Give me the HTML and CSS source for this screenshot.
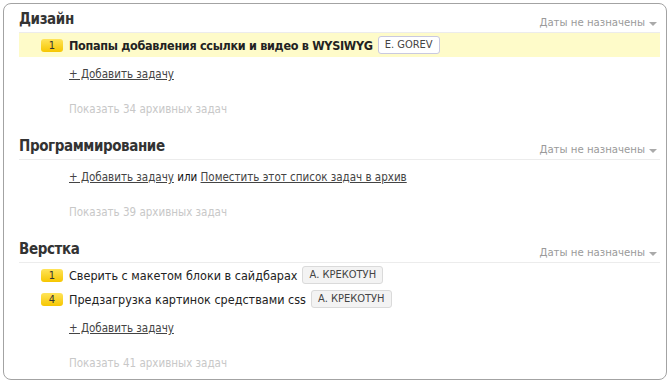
FILE: index.html
```html
<!DOCTYPE html>
<html lang="ru">
<head>
<meta charset="utf-8">
<link rel="stylesheet" href="styles.css">
</head>
<body>
<div class="panel">
  <section class="list">
    <div class="list-head">
      <h2 class="list-title">Дизайн</h2>
      <span class="dates">Даты не назначены <span class="caret"></span></span>
    </div>
    <div class="task task-hl">
      <span class="prio">1</span>
      <span class="task-text bold">Попапы добавления ссылки и видео в WYSIWYG</span>
      <span class="tag tag-me">E. GOREV</span>
    </div>
    <div class="add"><a href="#" class="link">+ Добавить задачу</a></div>
    <div class="archive">Показать 34 архивных задач</div>
  </section>
  <section class="list">
    <div class="list-head">
      <h2 class="list-title">Программирование</h2>
      <span class="dates">Даты не назначены <span class="caret"></span></span>
    </div>
    <div class="add"><a href="#" class="link">+ Добавить задачу</a> <span class="or">или</span> <a href="#" class="link">Поместить этот список задач в архив</a></div>
    <div class="archive">Показать 39 архивных задач</div>
  </section>
  <section class="list">
    <div class="list-head">
      <h2 class="list-title">Верстка</h2>
      <span class="dates">Даты не назначены <span class="caret"></span></span>
    </div>
    <div class="task">
      <span class="prio">1</span>
      <span class="task-text">Сверить с макетом блоки в сайдбарах</span>
      <span class="tag">А. КРЕКОТУН</span>
    </div>
    <div class="task">
      <span class="prio">4</span>
      <span class="task-text">Предзагрузка картинок средствами css</span>
      <span class="tag">А. КРЕКОТУН</span>
    </div>
    <div class="add"><a href="#" class="link">+ Добавить задачу</a></div>
    <div class="archive">Показать 41 архивных задач</div>
  </section>
</div>
</body>
</html>
```
FILE: styles.css
```css
* { box-sizing: border-box; }
html, body { margin: 0; padding: 0; background: #fff; }
body {
  font-family: "DejaVu Sans Condensed", "DejaVu Sans", "Liberation Sans", sans-serif;
  font-stretch: semi-condensed;
  color: #222;
}
.panel {
  margin: 3px 0 0 3px;
  width: 664px;
  height: 377px;
  border: 1px solid #a3a3a3;
  border-radius: 8px;
  padding: 0 6px 0 15px;
}
.list { padding-bottom: 8px; }
.list + .list { margin-top: 5px; }
.list-head {
  display: flex;
  justify-content: space-between;
  align-items: flex-end;
  padding: 5px 0 3px;
  border-bottom: 1px solid #ececec;
}
.list-title {
  margin: 0;
  font-size: 15px;
  line-height: 20px;
  font-weight: bold;
  color: #333;
  letter-spacing: -0.4px;
}
.dates {
  font-size: 11.3px;
  color: #9a9a9a;
  line-height: 16px;
  margin-right: 3px;
  margin-bottom: -2px;
  display: flex;
  align-items: center;
  gap: 4px;
}
.caret {
  width: 0; height: 0;
  border-left: 4px solid transparent;
  border-right: 4px solid transparent;
  border-top: 4px solid #aaa;
  margin-top: 2px;
}
.task {
  display: flex;
  align-items: center;
  height: 24px;
  padding-left: 22px;
  font-size: 12.5px;
}
.task-hl { background: #fefbc9; }
.prio {
  width: 22px;
  height: 13px;
  border-radius: 3px;
  background: linear-gradient(#ffe45a, #f6c600);
  color: #333;
  font-size: 11px;
  line-height: 13px;
  text-align: center;
  margin-right: 6px;
}
.task-text { color: #222; }
.bold { font-weight: bold; letter-spacing: -0.3px; }
.tag {
  margin-left: 5px;
  height: 18px;
  line-height: 16px;
  padding: 0 6px;
  border: 1px solid #dadada;
  background: #f3f3f3;
  border-radius: 3px;
  font-size: 11px;
  color: #444;
}
.tag-me { background: #fff; border-color: #c9c9e0; }
.add {
  margin-top: 8px;
  padding-left: 50px;
  font-size: 11.5px;
  line-height: 18px;
  color: #222;
}
.link { color: #444; text-decoration: underline; }
.or { color: #111; }
.archive {
  margin-top: 17px;
  padding-left: 50px;
  font-size: 11.5px;
  line-height: 18px;
  color: #c8c8c8;
}
```
